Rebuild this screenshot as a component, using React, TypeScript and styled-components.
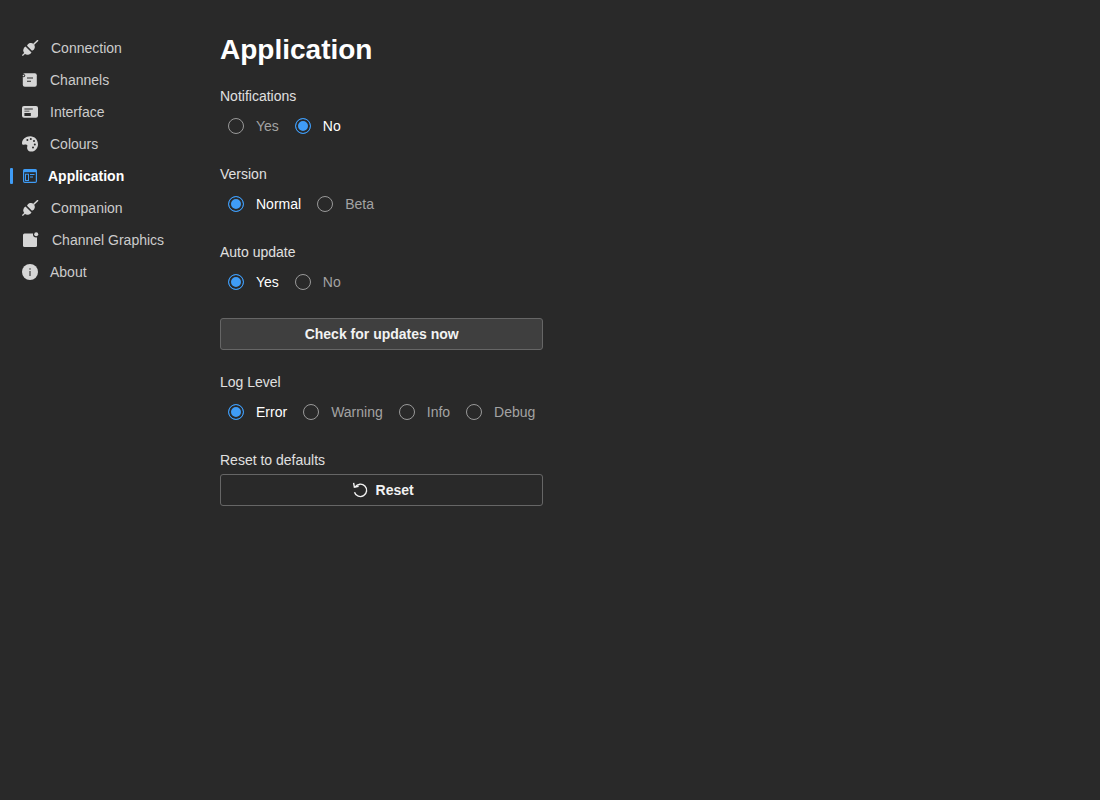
import { PropsWithChildren, ReactNode, useState } from "react";
import styled, { createGlobalStyle } from "styled-components";

const bg = "#292929";
const accent = "#3f9cf6";

const GlobalStyle = createGlobalStyle`
  html, body {
    margin: 0;
    height: 100%;
    background: ${bg};
    font-family: "Liberation Sans", Arial, sans-serif;
    font-size: 14px;
  }
`;

const Page = styled.div`
  display: flex;
  align-items: flex-start;
  min-height: 800px;
`;

const Sidebar = styled.nav`
  width: 220px;
  flex-shrink: 0;
  box-sizing: border-box;
  padding: 32px 0 0 22px;
  display: flex;
  flex-direction: column;
`;

const NavItem = styled.a<{ $active?: boolean }>`
  position: relative;
  display: flex;
  align-items: center;
  gap: ${(p) => (p.$active ? "11px" : "12px")};
  height: 32px;
  color: ${(p) => (p.$active ? "#ffffff" : "#cccccc")};
  font-weight: ${(p) => (p.$active ? 700 : 400)};
  padding-left: ${(p) => (p.$active ? "1px" : "0")};

  &::before {
    content: "";
    display: ${(p) => (p.$active ? "block" : "none")};
    position: absolute;
    left: -12px;
    top: 8px;
    width: 3px;
    height: 16px;
    border-radius: 1px;
    background: ${accent};
  }
`;

const Main = styled.main`
  display: flex;
  flex-direction: column;
  padding-top: 32px;
`;

const Title = styled.h1`
  margin: 0 0 18px;
  font-size: 28px;
  line-height: 36px;
  font-weight: 700;
  color: #ffffff;
`;

const Section = styled.section<{ $tight?: boolean }>`
  display: flex;
  flex-direction: column;
  gap: 4px;
  margin-bottom: ${(p) => (p.$tight ? "20px" : "22px")};
`;

const FieldLabel = styled.div`
  color: #e0e0e0;
  line-height: 20px;
`;

const RadioRow = styled.div`
  display: flex;
  align-items: center;
  gap: 16px;
  height: 32px;
  padding: 0 8px;
`;

const RadioOption = styled.label<{ $checked: boolean }>`
  display: flex;
  align-items: center;
  gap: 12px;
  color: ${(p) => (p.$checked ? "#ffffff" : "#a3a3a3")};
  white-space: nowrap;
  cursor: pointer;
`;

const RadioCircle = styled.input.attrs({ type: "radio" })`
  appearance: none;
  box-sizing: border-box;
  width: 16px;
  height: 16px;
  margin: 0;
  border-radius: 50%;
  border: 1px solid #999999;
  background: transparent;
  cursor: pointer;

  &:checked {
    border-color: ${accent};
    background: ${accent};
    box-shadow: inset 0 0 0 2px ${bg};
  }
`;

const Button = styled.button<{ $filled?: boolean }>`
  display: flex;
  align-items: center;
  justify-content: center;
  gap: 8px;
  width: 100%;
  height: 32px;
  padding: 0;
  border: 1px solid #666666;
  border-radius: 3px;
  background: ${(p) => (p.$filled ? "#3f3f3f" : "transparent")};
  color: #f2f2f2;
  font: 700 14px "Liberation Sans", Arial, sans-serif;
  cursor: pointer;
`;

const iconColor = "#d6d6d6";

const Icon = ({ w = 16, h = 16, children, color = iconColor }: PropsWithChildren<{ w?: number; h?: number; color?: string }>) => (
  <svg width={w} height={h} viewBox={`0 0 ${w} ${h}`} fill={color} style={{ flexShrink: 0 }}>
    {children}
  </svg>
);

const PlugIcon = () => (
  <Icon w={17} h={16}>
    <path d="M0.4 15.6 L3.6 12.4" stroke={iconColor} strokeWidth="1.3" />
    <path d="M11.5 4.5 L16 0.2" stroke={iconColor} strokeWidth="1.5" />
    <path d="M3.5 6.5 L9.5 12.5 A4.4 4.4 0 1 1 3.5 6.5Z" />
    <path d="M5 5.8 A4 4 0 1 1 10 10.8Z" />
  </Icon>
);

const ChannelsIcon = () => (
  <Icon>
    <rect x="0.8" y="1.3" width="14" height="13.5" rx="2" />
    <circle cx="1.5" cy="3.6" r="1.7" fill={bg} />
    <circle cx="1.5" cy="3.6" r="0.8" />
    <path d="M5 5.5h6v1H5zM5 8.7h4v1H5z" fill={bg} />
  </Icon>
);

const InterfaceIcon = () => (
  <Icon>
    <rect x="0" y="2" width="16" height="11.8" rx="2" />
    <path d="M2.4 4.6h8.4v1H2.4zM2.4 6.8h5v0.8H2.4z" fill={bg} />
    <rect x="2.4" y="9" width="6.4" height="3" fill={bg} />
  </Icon>
);

const PaletteIcon = () => (
  <Icon>
    <path d="M8.2 0.2C3.8 0.2 0 3.4 0 7.2c0 1.1 0.9 1.7 2 1.5 1.4-0.2 2.6-0.5 3.2 0.4 0.6 1-0.4 2 0 3.6 0.5 2 2.4 3 4.4 2.9 3.6-0.2 6.4-3.4 6.4-7.4 0-4.4-3.4-8-7.8-8Z" />
    <circle cx="5.4" cy="4" r="1" fill={bg} />
    <circle cx="8.8" cy="3" r="1" fill={bg} />
    <circle cx="12" cy="5" r="1" fill={bg} />
    <circle cx="12.8" cy="8.4" r="1" fill={bg} />
    <circle cx="11" cy="11.6" r="1" fill={bg} />
  </Icon>
);

const ApplicationIcon = () => (
  <Icon w={14} h={14} color="none">
    <rect x="0.6" y="0.6" width="12.8" height="12.8" rx="1.2" stroke={accent} strokeWidth="1.2" />
    <rect x="0.6" y="0.6" width="12.8" height="2.6" fill={accent} />
    <rect x="2.5" y="5.2" width="3" height="6.3" stroke={accent} strokeWidth="1" />
    <path d="M7 5.5h4.5M7 8h3" stroke={accent} strokeWidth="1" />
  </Icon>
);

const GraphicsIcon = () => (
  <Icon w={18} h={16}>
    <rect x="1" y="1.5" width="14" height="13.5" rx="1.5" />
    <circle cx="14.2" cy="2.2" r="3.2" fill={bg} />
    <circle cx="14.2" cy="2.2" r="2" />
  </Icon>
);

const InfoIcon = () => (
  <Icon>
    <circle cx="8" cy="8" r="8" />
    <rect x="7.3" y="7" width="1.4" height="5" fill="#555555" />
    <rect x="7.3" y="4.2" width="1.4" height="1.5" fill="#555555" />
  </Icon>
);

const ResetIcon = () => (
  <svg width="18" height="16" viewBox="0 0 18 16" fill="none" stroke="#f2f2f2" strokeWidth="1.4" style={{ flexShrink: 0 }}>
    <path d="M5.2 5 A6.2 6.2 0 1 1 4.5 10.2" />
    <path d="M3.6 0.8 L4.4 5.2 L8.6 4.2" />
  </svg>
);

const navItems: { label: string; icon: ReactNode; active?: boolean }[] = [
  { label: "Connection", icon: <PlugIcon /> },
  { label: "Channels", icon: <ChannelsIcon /> },
  { label: "Interface", icon: <InterfaceIcon /> },
  { label: "Colours", icon: <PaletteIcon /> },
  { label: "Application", icon: <ApplicationIcon />, active: true },
  { label: "Companion", icon: <PlugIcon /> },
  { label: "Channel Graphics", icon: <GraphicsIcon /> },
  { label: "About", icon: <InfoIcon /> },
];

function RadioField({ label, options, initial, tight }: { label: string; options: string[]; initial: string; tight?: boolean }) {
  const [value, setValue] = useState(initial);
  return (
    <Section $tight={tight}>
      <FieldLabel>{label}</FieldLabel>
      <RadioRow>
        {options.map((option) => (
          <RadioOption key={option} $checked={value === option}>
            <RadioCircle name={label} checked={value === option} onChange={() => setValue(option)} />
            {option}
          </RadioOption>
        ))}
      </RadioRow>
    </Section>
  );
}

export default function App() {
  return (
    <Page>
      <GlobalStyle />
      <Sidebar>
        {navItems.map((item) => (
          <NavItem key={item.label} $active={item.active}>
            {item.icon}
            {item.label}
          </NavItem>
        ))}
      </Sidebar>
      <Main>
        <Title>Application</Title>
        <RadioField label="Notifications" options={["Yes", "No"]} initial="No" />
        <RadioField label="Version" options={["Normal", "Beta"]} initial="Normal" />
        <RadioField label="Auto update" options={["Yes", "No"]} initial="Yes" tight />
        <Section>
          <Button $filled>Check for updates now</Button>
        </Section>
        <RadioField label="Log Level" options={["Error", "Warning", "Info", "Debug"]} initial="Error" />
        <Section>
          <FieldLabel>Reset to defaults</FieldLabel>
          <Button>
            <ResetIcon />
            Reset
          </Button>
        </Section>
      </Main>
    </Page>
  );
}
